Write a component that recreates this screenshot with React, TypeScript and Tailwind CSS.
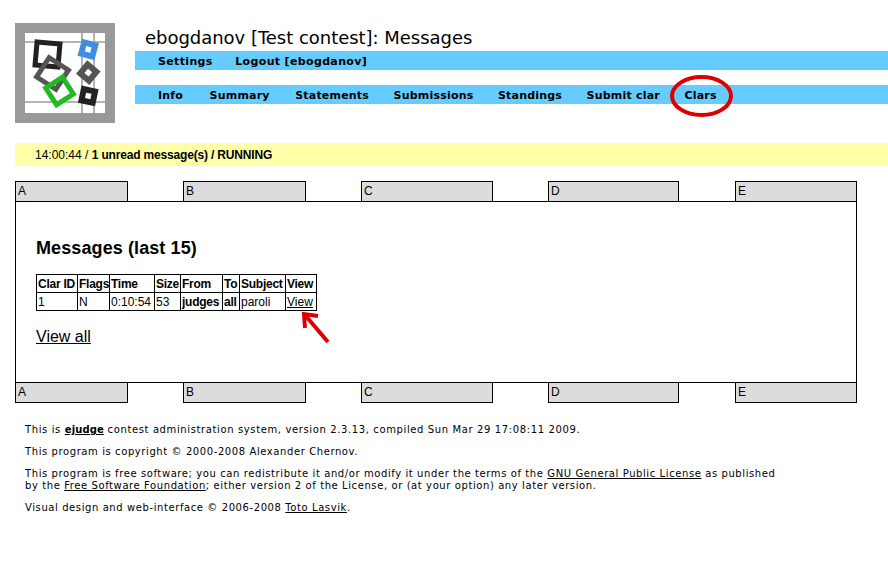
const TOP_NAV = ['Info', 'Summary', 'Statements', 'Submissions', 'Standings', 'Submit clar', 'Clars']

const CELL = 'border border-black px-px whitespace-nowrap overflow-hidden h-[18px]'

function Logo() {
  return (
    <div className="w-[100px] h-[100px] bg-[#999999] p-[10px] flex-shrink-0">
      <svg width="80" height="80" viewBox="0 0 80 80" className="block">
        <rect x="0" y="0" width="80" height="80" fill="#ffffff" />
        <path d="M0 9H80M0 69H80M57 0V80M69 0V80" stroke="#b4b4b4" strokeWidth="2" fill="none" />
        <rect x="11" y="10" width="23" height="23" fill="none" stroke="#222222" strokeWidth="5" transform="rotate(5 22.5 21.5)" />
        <rect x="16" y="29" width="23" height="23" fill="none" stroke="#555555" strokeWidth="5" transform="rotate(33 27.5 40.5)" />
        <rect x="24.5" y="48" width="20" height="20" fill="none" stroke="#1fbb1f" strokeWidth="5" transform="rotate(-33 34.5 58)" />
        <rect x="57.5" y="10.7" width="11.5" height="11.5" fill="none" stroke="#3f8fe0" strokeWidth="6" transform="rotate(15 63.3 16.5)" />
        <rect x="57.5" y="33.9" width="11.5" height="11.5" fill="none" stroke="#555555" strokeWidth="6" transform="rotate(40 63.3 39.7)" />
        <rect x="57.5" y="57.2" width="11.5" height="11.5" fill="none" stroke="#222222" strokeWidth="6" transform="rotate(12 63.3 63)" />
      </svg>
    </div>
  )
}

function TabRow({ className }: { className: string }) {
  return (
    <div className={`flex font-['Liberation_Sans',sans-serif] text-[12px] text-black leading-[19px] ${className}`}>
      <div className="w-[113px] h-[21px] bg-[#dcdcdc] border border-black pl-[2px]">A</div>
      <div className="w-[123px] h-[21px] ml-[55px] bg-[#dcdcdc] border border-black pl-[2px]">B</div>
      <div className="w-[132px] h-[21px] ml-[55px] bg-[#dcdcdc] border border-black pl-[2px]">C</div>
      <div className="w-[131px] h-[21px] ml-[55px] bg-[#dcdcdc] border border-black pl-[2px]">D</div>
      <div className="w-[122px] h-[21px] ml-[56px] bg-[#dcdcdc] border border-black pl-[2px]">E</div>
    </div>
  )
}

export default function App() {
  return (
    <div className="relative w-[888px] h-[570px] bg-white overflow-hidden font-['DejaVu_Sans',sans-serif] text-black">
      {/* Header */}
      <div className="flex pt-[23px] pl-[15px]">
        <Logo />
        <div className="flex-1 ml-[20px]">
          <div className="pl-[10px] h-[28px] text-[18px] leading-[30px] tracking-[-0.03px]">ebogdanov [Test contest]: Messages</div>
          <div className="h-[19px] bg-[#66ccff] flex pl-[23px] gap-[22.5px] text-[11px] font-bold leading-[21px] tracking-[0.35px]">
            <span>Settings</span>
            <span>Logout [ebogdanov]</span>
          </div>
          <div className="mt-[15px] h-[19px] bg-[#66ccff] flex pl-[23px] gap-[24.5px] text-[11px] font-bold leading-[21px] tracking-[0.2px]">
            {TOP_NAV.map((item) => (
              <span key={item} className="first:mr-[2px] nth-2:mr-[1px]">{item}</span>
            ))}
          </div>
        </div>
      </div>

      {/* Status */}
      <div className="ml-[15px] mt-[20px] h-[23px] bg-[#ffffaa] pl-[20px] font-['Liberation_Sans',sans-serif] text-[12px] leading-[25px]">
        14:00:44 / <b className="tracking-[-0.17px]">1 unread message(s) / RUNNING</b>
      </div>

      <TabRow className="ml-[15px] mt-[15px]" />

      {/* Main box */}
      <div className="ml-[15px] mt-[-1px] w-[842px] h-[182px] border border-black pl-[20px] pt-[36px] font-['Liberation_Sans',sans-serif]">
        <h1 className="text-[18px] font-bold leading-[21px] tracking-[0.1px]">Messages (last 15)</h1>
        <table className="mt-[15px] w-[280px] table-fixed border-collapse text-[12px] leading-[16px]">
          <tbody>
            <tr className="font-bold tracking-[-0.25px]">
              <td className={`${CELL} w-[41px]`}>Clar ID</td>
              <td className={`${CELL} w-[32px]`}>Flags</td>
              <td className={`${CELL} w-[45px]`}>Time</td>
              <td className={`${CELL} w-[26px]`}>Size</td>
              <td className={`${CELL} w-[42px]`}>From</td>
              <td className={`${CELL} w-[17px]`}>To</td>
              <td className={`${CELL} w-[46px]`}>Subject</td>
              <td className={`${CELL} w-[31px]`}>View</td>
            </tr>
            <tr>
              <td className={CELL}>1</td>
              <td className={CELL}>N</td>
              <td className={CELL}>0:10:54</td>
              <td className={CELL}>53</td>
              <td className={`${CELL} font-bold tracking-[-0.25px]`}>judges</td>
              <td className={`${CELL} font-bold tracking-[-0.25px]`}>all</td>
              <td className={CELL}>paroli</td>
              <td className={`${CELL} underline`}>View</td>
            </tr>
          </tbody>
        </table>
        <div className="mt-[17px] text-[16px] leading-[18px] underline">View all</div>
      </div>

      <TabRow className="ml-[15px] mt-[-1px]" />

      {/* Footer */}
      <div className="ml-[25px] mt-[21px] text-[10px] leading-[12px] tracking-[0.59px] text-black">
        <p className="tracking-[0.62px]">
          This is <b className="underline tracking-[0.1px]">ejudge</b> contest administration system, version 2.3.13, compiled Sun Mar 29 17:08:11 2009.
        </p>
        <p className="mt-[10px]">This program is copyright © 2000-2008 Alexander Chernov.</p>
        <p className="mt-[10px]">
          This program is free software; you can redistribute it and/or modify it under the terms of the{' '}
          <span className="underline">GNU General Public License</span> as published
          <br />
          by the <span className="underline">Free Software Foundation</span>; either version 2 of the License, or (at your option) any later version.
        </p>
        <p className="mt-[10px]">
          Visual design and web-interface © 2006-2008 <span className="underline">Toto Lasvik</span>.
        </p>
      </div>

      {/* Red annotations drawn over the screenshot */}
      <svg className="absolute left-[660px] top-[65px]" width="90" height="60" viewBox="0 0 90 60">
        <ellipse cx="41.5" cy="31" rx="29.5" ry="19" fill="none" stroke="#dd0000" strokeWidth="4" />
      </svg>
      <svg className="absolute left-[295px] top-[305px]" width="40" height="42" viewBox="0 0 40 42">
        <path d="M33 37L10 10" stroke="#dd0000" strokeWidth="4" fill="none" />
        <path d="M10 23L9 9L23 11" stroke="#dd0000" strokeWidth="4" fill="none" />
      </svg>
    </div>
  )
}
